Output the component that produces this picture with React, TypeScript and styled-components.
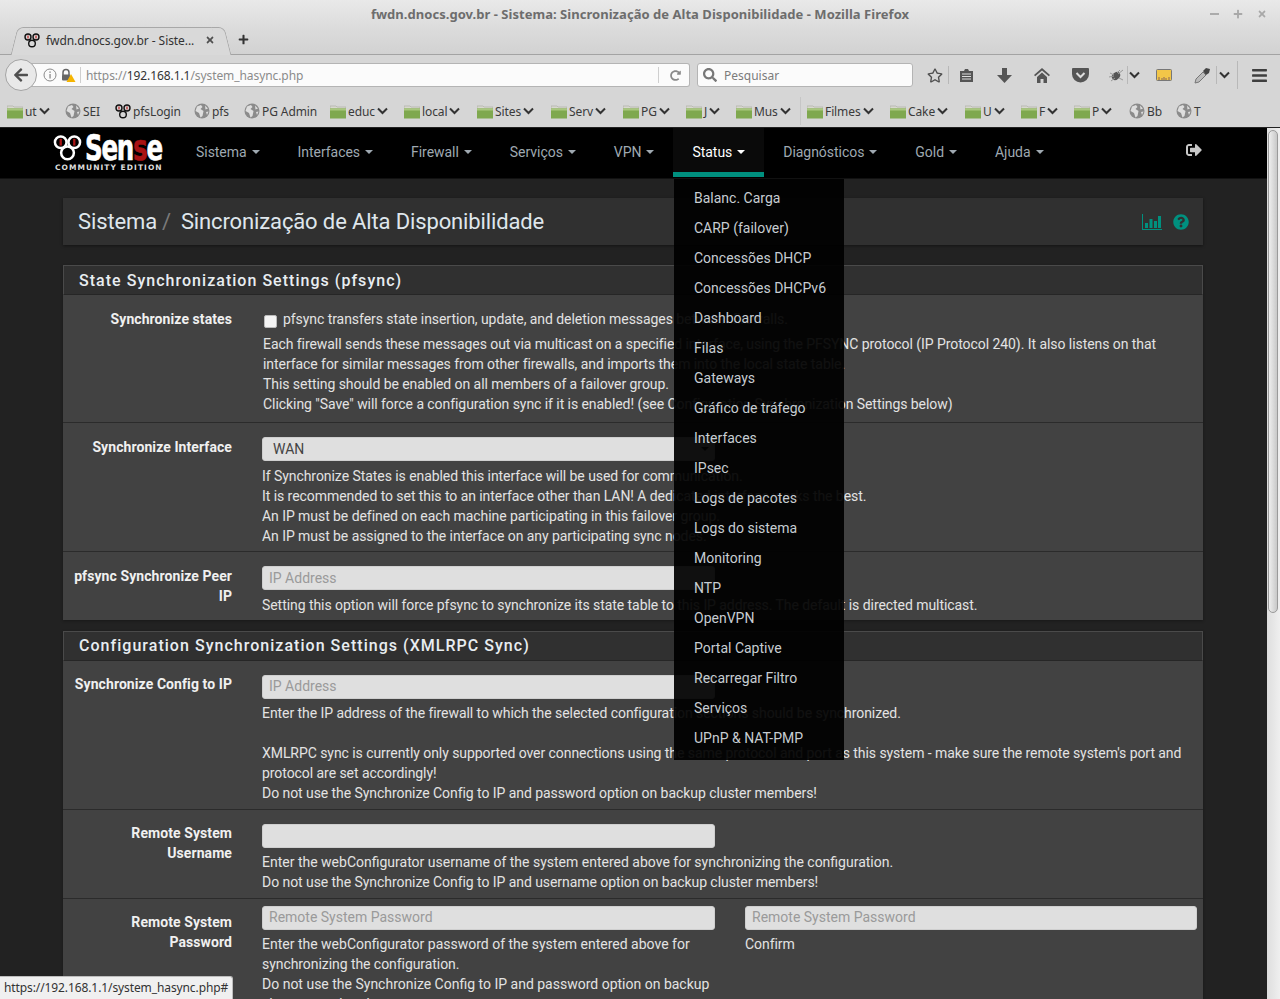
import React from "react";
import styled, { createGlobalStyle } from "styled-components";
import {
  FaArrowLeft,
  FaBars,
  FaPlus,
  FaQuestionCircle,
  FaRedoAlt,
  FaRegStar,
  FaSearch,
  FaSignOutAlt,
  FaTimes,
} from "react-icons/fa";

const GlobalStyle = createGlobalStyle`
  html, body {
    margin: 0;
    padding: 0;
    height: 999px;
    overflow: hidden;
    background: #222;
  }
  * {
    box-sizing: border-box;
  }
`;

const Window = styled.div`
  width: 1280px;
  height: 999px;
  position: relative;
  overflow: hidden;
  display: flex;
  flex-direction: column;
`;

const Chrome = styled.div`
  font-family: "Noto Sans", sans-serif;
  color: #3c3c3c;
  background: #d6d6d6;
`;

const TitleBar = styled.div`
  height: 27px;
  display: flex;
  align-items: center;
  justify-content: center;
  position: relative;
  font-size: 13px;
  font-weight: 700;
  letter-spacing: 0.035px;
  color: #6d6d6d;
  background: linear-gradient(#e9e9e9, #dcdcdc);
`;

const WindowButtons = styled.div`
  position: absolute;
  right: 13px;
  top: 9px;
  display: flex;
  gap: 14px;
  align-items: center;
  color: #a8a8a8;
  font-size: 10px;
`;

const Minimize = styled.span`
  width: 9px;
  height: 2px;
  background: #ababab;
`;

const TabStrip = styled.div`
  height: 28px;
  display: flex;
  align-items: flex-end;
  padding-left: 20px;
  border-bottom: 1px solid #a3a3a3;
  background: linear-gradient(#dcdcdc, #d2d2d2);
`;

const Tab = styled.div`
  width: 202px;
  height: 28px;
  margin-bottom: -1px;
  position: relative;
  display: flex;
  align-items: center;
  padding: 0 0 3px 4px;
  gap: 7px;
  font-size: 12px;
  letter-spacing: -0.07px;
  color: #333;
  background: #d9d9d9;
  border-top: 1px solid #a8a8a8;
  border-radius: 6px 6px 0 0;

  &::before,
  &::after {
    content: "";
    position: absolute;
    top: -1px;
    bottom: 0;
    width: 12px;
    background: #d9d9d9;
    border-top: 1px solid #a8a8a8;
  }
  &::before {
    left: -6px;
    transform: skewX(-14deg);
    border-left: 1px solid #a8a8a8;
    border-radius: 6px 0 0 0;
  }
  &::after {
    right: -6px;
    transform: skewX(14deg);
    border-right: 1px solid #a8a8a8;
    border-radius: 0 6px 0 0;
  }
`;

const TabContent = styled.span`
  position: relative;
  z-index: 1;
  display: flex;
  align-items: center;
  gap: 6px;
  white-space: nowrap;
`;

const TabClose = styled.span`
  position: relative;
  z-index: 1;
  display: flex;
  margin-left: 4px;
  color: #505050;
  font-size: 10px;
`;

const NewTab = styled.span`
  display: flex;
  margin: 0 0 9px 16px;
  font-size: 11px;
  color: #333;
`;

const NavBar = styled.div`
  height: 39px;
  display: flex;
  align-items: center;
  padding: 1px 0 0 5px;
  background: #d6d6d6;
  position: relative;
`;

const BackButton = styled.div`
  width: 32px;
  height: 32px;
  border-radius: 50%;
  border: 1px solid #a4a4a4;
  background: #e9e9e9;
  display: flex;
  align-items: center;
  justify-content: center;
  color: #505050;
  font-size: 16px;
  position: relative;
  z-index: 1;
  flex: none;
`;

const UrlBar = styled.div`
  width: 661px;
  height: 24px;
  margin-left: -8px;
  padding-left: 14px;
  display: flex;
  align-items: center;
  background: #fbfbfb;
  border: 1px solid #b4b4b4;
  border-left: none;
  border-radius: 0 3px 3px 0;
  font-size: 12px;
  letter-spacing: -0.08px;
  color: #8b8b8b;
  flex: none;
`;

const UrlHost = styled.span`
  color: #333;
`;

const UrlDivider = styled.span`
  width: 1px;
  height: 16px;
  background: #cfcfcf;
  margin: 0 5px 0 4px;
`;

const UrlText = styled.span`
  flex: 1;
`;

const Reload = styled.span`
  display: flex;
  width: 25px;
  padding-right: 3px;
  justify-content: center;
  color: #8a8a8a;
  font-size: 11px;
`;

const SearchBar = styled.div`
  width: 216px;
  height: 24px;
  margin-left: 7px;
  padding-left: 5px;
  display: flex;
  align-items: center;
  gap: 7px;
  background: #fbfbfb;
  border: 1px solid #b4b4b4;
  border-radius: 3px;
  font-size: 12px;
  color: #7c7c7c;
  flex: none;
`;

const ToolIcons = styled.div`
  flex: 1;
  display: flex;
  align-items: center;
  padding-left: 14px;
  color: #4f4f4f;
  font-size: 15px;
`;

const ToolIcon = styled.span<{ $w: number }>`
  width: ${(p) => p.$w}px;
  display: flex;
  align-items: center;
  justify-content: center;
  flex: none;
`;

const ToolSep = styled.span`
  width: 1px;
  height: 18px;
  background: #b8b8b8;
  flex: none;
`;

const ToolSepTall = styled(ToolSep)`
  height: 28px;
  margin: 0 12px 0 6px;
`;

const BookmarkBar = styled.div`
  height: 34px;
  display: flex;
  align-items: center;
  padding: 1px 0 0 7px;
  font-size: 12px;
  color: #3a3a3a;
  border-bottom: 1px solid #222;
  background: #d6d6d6;
  letter-spacing: -0.1px;
`;

const Bookmark = styled.span<{ $w: number; $sep?: boolean }>`
  width: ${(p) => p.$w}px;
  display: flex;
  align-items: center;
  gap: 2px;
  white-space: nowrap;
  flex: none;
  ${(p) =>
    p.$sep
      ? `
    height: 28px;
    margin-right: 6px;
    border-right: 1px solid #c6c6c6;
  `
      : ""}
`;

const Page = styled.div`
  flex: 1;
  display: flex;
  min-height: 0;
`;

const Viewport = styled.div`
  flex: 1;
  min-width: 0;
  font-family: Roboto, sans-serif;
  background: #222;
  overflow: hidden;
`;

const Scrollbar = styled.div`
  width: 13px;
  flex: none;
  background: linear-gradient(90deg, #dedede, #efefef);
  padding: 2px 2px 0 1px;
`;

const Thumb = styled.div`
  height: 483px;
  border-radius: 5px;
  border: 1px solid #9a9a9a;
  background: linear-gradient(90deg, #eee, #c8c8c8);
`;

const TopNav = styled.div`
  height: 51px;
  background: #000;
  display: flex;
  align-items: flex-start;
  padding-left: 53px;
  border-bottom: 1px solid #111;
`;

const Logo = styled.div`
  width: 124px;
  flex: none;
  padding-top: 6px;
`;

const LogoRow = styled.div`
  display: flex;
  align-items: center;
  height: 28px;

  svg {
    flex: none;
  }
`;

const LogoWord = styled.span`
  font-family: "DejaVu Sans Condensed", "DejaVu Sans", sans-serif;
  font-weight: 700;
  font-size: 35px;
  line-height: 28px;
  color: #fff;
  letter-spacing: -1.6px;
  display: inline-block;
  margin-left: 3px;
  transform: scaleX(0.78);
  transform-origin: left center;
  white-space: nowrap;
  -webkit-text-stroke: 0.6px currentColor;
`;

const LogoRed = styled.span`
  color: #a91313;
`;

const LogoEdition = styled.div`
  font-family: "DejaVu Sans", sans-serif;
  font-weight: 700;
  font-size: 7.5px;
  letter-spacing: 1.05px;
  line-height: 8px;
  margin: 2px 0 0 2px;
  color: #ddd;
  white-space: nowrap;
`;

const NavItem = styled.div<{ $active?: boolean }>`
  display: flex;
  align-items: center;
  gap: 5px;
  padding: 4px 19px 0;
  height: 49px;
  font-size: 14px;
  letter-spacing: -0.04px;
  color: ${(p) => (p.$active ? "#fff" : "#9fa9b1")};
  background: ${(p) => (p.$active ? "#0a0a0a" : "transparent")};
  border-bottom: 5px solid ${(p) => (p.$active ? "#00907f" : "transparent")};
  white-space: nowrap;
`;

const Caret = styled.span`
  width: 0;
  height: 0;
  border-left: 4px solid transparent;
  border-right: 4px solid transparent;
  border-top: 4px solid currentColor;
`;

const LogoutIcon = styled.div`
  margin-left: auto;
  padding: 14px 65px 0 0;
  color: #c8c8c8;
  font-size: 16px;
`;

const Content = styled.div`
  padding: 19px 64px 0 63px;
`;

const Breadcrumb = styled.div`
  height: 47px;
  background: #303030;
  display: flex;
  align-items: center;
  padding: 0 15px;
  font-size: 22px;
  letter-spacing: -0.13px;
  color: #dfe6ec;
  box-shadow: 0 1px 3px rgba(0, 0, 0, 0.45);
`;

const Slash = styled.span`
  color: #7a7a7a;
  margin: 0 10px 0 5px;
`;

const BreadActions = styled.div`
  margin-left: auto;
  margin-right: -1px;
  display: flex;
  align-items: center;
  gap: 11px;
  color: #00907f;
  font-size: 16px;
`;

const Label = styled.div`
  text-align: right;
  font-weight: 700;
  color: #f0f0f0;
  letter-spacing: 0.08px;
  padding-left: 10px;
`;

const Input = styled.div<{ $width?: number }>`
  width: ${(p) => p.$width ?? 453}px;
  height: 24px;
  margin-bottom: 5px;
  padding: 0 6px;
  background: #dfdfdf;
  border: 1px solid #cfcfcf;
  border-radius: 3px;
  display: flex;
  align-items: center;
  color: #9a9a9a;
  font-size: 14px;
  letter-spacing: 0;
`;

const Select = styled(Input)`
  color: #444;
  padding: 0 5px 0 10px;
`;

const SelectCaret = styled(Caret)`
  margin-left: auto;
  color: #333;
`;

const Section = styled.section`
  margin: 20px 0 11px;
  background: #424242;
  box-shadow: 0 1px 3px rgba(0, 0, 0, 0.3);
`;

const SectionTitle = styled.h2`
  margin: 0;
  height: 30px;
  padding: 0 15px;
  display: flex;
  align-items: center;
  font-size: 16px;
  font-weight: 500;
  letter-spacing: 1.03px;
  color: #e8edf1;
  background: #303030;
  border: 1px solid #4a4a4a;
  border-bottom-color: #262626;
`;

const SectionNext = styled(Section)`
  margin-top: 0;

  ${SectionTitle} {
    padding-bottom: 2px;
  }
  ${Input} {
    margin-bottom: 4px;
    padding-bottom: 2px;
  }
  ${Label} {
    margin-top: -1px;
  }
`;

const Row = styled.div<{ $pb?: number }>`
  display: grid;
  grid-template-columns: 169px 1fr;
  column-gap: 30px;
  padding: 14px 6px ${(p) => p.$pb ?? 5}px 0;
  border-bottom: 1px solid #2b2b2b;
  font-size: 14px;
  line-height: 20px;
  color: #e3e3e3;

  &:last-child {
    border-bottom: none;
  }
`;

const Field = styled.div<{ $indent?: boolean }>`
  min-width: 0;
  letter-spacing: -0.06px;
  padding-left: ${(p) => (p.$indent ? "1px" : "0")};
`;

const TwoColumns = styled.div`
  display: grid;
  grid-template-columns: 453px 452px;
  column-gap: 30px;
  margin-top: -7px;
  letter-spacing: -0.06px;
`;

const Line = styled.div<{ $wide?: boolean }>`
  white-space: nowrap;
  ${(p) => (p.$wide ? "letter-spacing: 0;" : "")}
`;

const BlankLine = styled.div`
  height: 20px;
`;

const CheckLine = styled.div`
  display: flex;
  align-items: center;
  gap: 6px;
  margin-left: 1px;
  margin-bottom: 5px;
`;

const Checkbox = styled.span`
  width: 13px;
  height: 13px;
  margin-top: 4px;
  border-radius: 2px;
  background: #f4f4f4;
  border: 1px solid #bbb;
  flex: none;
`;

const Menu = styled.div`
  position: absolute;
  left: 674px;
  top: 179px;
  width: 170px;
  height: 581px;
  padding: 4px 0 0;
  background: rgba(0, 0, 0, 0.93);
  font-family: Roboto, sans-serif;
  font-size: 14px;
  color: #c7cdd2;
`;

const MenuItem = styled.div`
  height: 30px;
  line-height: 30px;
  padding-left: 20px;
  white-space: nowrap;
`;

const StatusTip = styled.div`
  position: absolute;
  left: 0;
  bottom: 0;
  height: 23px;
  width: 233px;
  padding: 0 0 2px 4px;
  display: flex;
  align-items: center;
  font-family: "Noto Sans", sans-serif;
  font-size: 12px;
  letter-spacing: -0.1px;
  color: #333;
  background: #f0f0f0;
  border: 1px solid #bdbdbd;
  border-left: none;
  border-bottom: none;
  border-radius: 0 3px 0 0;
  white-space: nowrap;
`;

const Folder = () => (
  <svg width="16" height="15" viewBox="0 0 16 15">
    <path d="M0 2h6l1 1h9v2H0z" fill="#d8d8d0" stroke="#a8a8a0" strokeWidth=".6" />
    <rect y="4.500" width="16" height="10" fill="#7fa84f" />
    <rect y="4.500" width="16" height="2" fill="#a9c77f" />
  </svg>
);

const Globe = () => (
  <svg width="16" height="16" viewBox="0 0 16 16">
    <circle cx="8" cy="8" r="7.500" fill="#8b8b8b" />
    <path d="M3 3.500 7 2l1.500 2-2 2 3 2-1 5-2 1.500L5 10 1.500 8zM11 2.500l3 3-2.500 1zM12 9l2.500-.5-1.500 3.500z" fill="#dedede" />
  </svg>
);

const PfIcon = ({ size = 16 }: { size?: number }) => (
  <svg width={size} height={size} viewBox="0 0 16 16" fill="none">
    <circle cx="4" cy="5" r="3" stroke="#111" strokeWidth="1.4" />
    <circle cx="12" cy="5" r="3" stroke="#111" strokeWidth="1.4" />
    <circle cx="8" cy="11.500" r="3.300" stroke="#111" strokeWidth="1.4" />
    <rect x="3.400" y="3.500" width="1.200" height="3" fill="#b22" />
    <rect x="11.400" y="3.500" width="1.200" height="3" fill="#b22" />
  </svg>
);

const Chevron = () => (
  <svg width="11" height="8" viewBox="0 0 11 8" fill="none" stroke="#333" strokeWidth="2">
    <path d="M1 1.500 5.500 6 10 1.500" />
  </svg>
);

const LogoMark = () => (
  <svg width="29" height="28" viewBox="0 0 30 28" fill="none">
    <circle cx="8" cy="8" r="6" stroke="#fff" strokeWidth="2.6" />
    <circle cx="22" cy="8" r="6" stroke="#fff" strokeWidth="2.6" />
    <circle cx="15" cy="19" r="6.600" stroke="#fff" strokeWidth="2.6" />
    <rect x="6.800" y="4.500" width="2.400" height="7" fill="#a91313" />
    <rect x="20.800" y="4.500" width="2.400" height="7" fill="#a91313" />
  </svg>
);

const bookmarks = [
  { name: "ut", w: 58, kind: "folder" },
  { name: "SEI", w: 50, kind: "globe" },
  { name: "pfsLogin", w: 79, kind: "pf" },
  { name: "pfs", w: 50, kind: "globe" },
  { name: "PG Admin", w: 86, kind: "globe" },
  { name: "educ", w: 74, kind: "folder" },
  { name: "local", w: 73, kind: "folder" },
  { name: "Sites", w: 74, kind: "folder" },
  { name: "Serv", w: 72, kind: "folder" },
  { name: "PG", w: 63, kind: "folder" },
  { name: "J", w: 50, kind: "folder" },
  { name: "Mus", w: 65, kind: "folder", sep: true },
  { name: "Filmes", w: 83, kind: "folder" },
  { name: "Cake", w: 75, kind: "folder" },
  { name: "U", w: 56, kind: "folder" },
  { name: "F", w: 53, kind: "folder" },
  { name: "P", w: 55, kind: "folder" },
  { name: "Bb", w: 47, kind: "globe" },
  { name: "T", w: 30, kind: "globe" },
];

const navItems = ["Sistema", "Interfaces", "Firewall", "Serviços", "VPN"];
const navItemsAfter = ["Diagnósticos", "Gold", "Ajuda"];

const statusMenu = [
  "Balanc. Carga",
  "CARP (failover)",
  "Concessões DHCP",
  "Concessões DHCPv6",
  "Dashboard",
  "Filas",
  "Gateways",
  "Gráfico de tráfego",
  "Interfaces",
  "IPsec",
  "Logs de pacotes",
  "Logs do sistema",
  "Monitoring",
  "NTP",
  "OpenVPN",
  "Portal Captive",
  "Recarregar Filtro",
  "Serviços",
  "UPnP & NAT-PMP",
];

export default function App() {
  return (
    <Window>
      <GlobalStyle />
      <Chrome>
        <TitleBar>
          fwdn.dnocs.gov.br - Sistema: Sincronização de Alta Disponibilidade - Mozilla Firefox
          <WindowButtons>
            <Minimize />
            <FaPlus />
            <FaTimes />
          </WindowButtons>
        </TitleBar>
        <TabStrip>
          <Tab>
            <TabContent>
              <PfIcon />
              fwdn.dnocs.gov.br - Siste...
            </TabContent>
            <TabClose>
              <FaTimes />
            </TabClose>
          </Tab>
          <NewTab>
            <FaPlus />
          </NewTab>
        </TabStrip>
        <NavBar>
          <BackButton>
            <FaArrowLeft />
          </BackButton>
          <UrlBar>
            <svg width="14" height="14" viewBox="0 0 14 14" fill="none">
              <circle cx="7" cy="7" r="6" stroke="#8a8a8a" />
              <rect x="6.400" y="6" width="1.300" height="4.500" fill="#8a8a8a" />
              <rect x="6.400" y="3.400" width="1.300" height="1.500" fill="#8a8a8a" />
            </svg>
            <svg width="15" height="15" viewBox="0 0 15 15" style={{ marginLeft: 4 }}>
              <path d="M2 7V4.500a3 3 0 0 1 6 0V7" fill="none" stroke="#666" strokeWidth="1.5" />
              <rect x="1" y="6.500" width="8" height="6" rx="1" fill="#666" />
              <path d="M10 6l4.500 8h-9z" fill="#f5b400" />
            </svg>
            <UrlDivider />
            <UrlText>
              https://<UrlHost>192.168.1.1</UrlHost>/system_hasync.php
            </UrlText>
            <UrlDivider />
            <Reload>
              <FaRedoAlt />
            </Reload>
          </UrlBar>
          <SearchBar>
            <FaSearch color="#777" size={14} />
            Pesquisar
          </SearchBar>
          <ToolIcons>
            <ToolIcon $w={16}>
              <FaRegStar size={17} />
            </ToolIcon>
            <ToolIcon $w={10}>
              <ToolSep />
            </ToolIcon>
            <ToolIcon $w={26}>
              <svg width="15" height="15" viewBox="0 0 15 15">
                <path d="M1 3h4l1-2h3l1 2h4v11H1z" fill="#555" />
                <path d="M3 6h9M3 8.500h9M3 11h9" stroke="#ddd" />
              </svg>
            </ToolIcon>
            <ToolIcon $w={50}>
              <svg width="15" height="15" viewBox="0 0 15 15" fill="#555">
                <path d="M5 0h5v7h5l-7.500 8L0 7h5z" />
              </svg>
            </ToolIcon>
            <ToolIcon $w={26}>
              <svg width="16" height="15" viewBox="0 0 16 15" fill="#555">
                <path d="M8 0 0 7l1.200 1.300L8 2.500l6.800 5.800L16 7z" />
                <path d="M3 9 8 4.500 13 9v6H9.500v-4h-3v4H3z" />
              </svg>
            </ToolIcon>
            <ToolIcon $w={50}>
              <svg width="17" height="15" viewBox="0 0 17 15">
                <path d="M1 0h15a1 1 0 0 1 1 1v5a8.500 8.500 0 0 1-17 0V1a1 1 0 0 1 1-1z" fill="#555" />
                <path d="M4.500 5 8.500 9l4-4" fill="none" stroke="#ddd" strokeWidth="2" />
              </svg>
            </ToolIcon>
            <ToolIcon $w={22}>
              <svg width="17" height="15" viewBox="0 0 17 15">
                <ellipse cx="8" cy="8" rx="3.500" ry="4.500" fill="#555" transform="rotate(50 8 8)" />
                <path d="M1 9l5-1M3 13l4-3M10 6l5-4M12 2l-3 3M2 5l4 2M11 10l4 2" stroke="#999" />
              </svg>
            </ToolIcon>
            <ToolIcon $w={1}>
              <ToolSep />
            </ToolIcon>
            <ToolIcon $w={12}>
              <Chevron />
            </ToolIcon>
            <ToolIcon $w={48}>
              <svg width="16" height="13" viewBox="0 0 16 13">
                <rect x=".5" y=".5" width="15" height="11" rx="1" fill="#f2c648" stroke="#777" />
                <path d="M3 11V8M6 11V9M8 11V8M10 11V9M13 11V8" stroke="#865" />
              </svg>
            </ToolIcon>
            <ToolIcon $w={28}>
              <svg width="17" height="17" viewBox="0 0 17 17">
                <path d="M1 16l1-4 7-7 3 3-7 7z" fill="#bbb" stroke="#777" />
                <path d="M9 4l3-3 4 1-1 4-3 2z" fill="#444" />
              </svg>
            </ToolIcon>
            <ToolIcon $w={1}>
              <ToolSep />
            </ToolIcon>
            <ToolIcon $w={14}>
              <Chevron />
            </ToolIcon>
            <ToolSepTall />
            <ToolIcon $w={18}>
              <FaBars size={17} color="#3f3f3f" />
            </ToolIcon>
          </ToolIcons>
        </NavBar>
        <BookmarkBar>
          {bookmarks.map((b) => (
            <Bookmark key={b.name} $w={b.w} $sep={b.sep}>
              {b.kind === "folder" && <Folder />}
              {b.kind === "globe" && <Globe />}
              {b.kind === "pf" && <PfIcon />}
              {b.name}
              {b.kind === "folder" && <Chevron />}
            </Bookmark>
          ))}
        </BookmarkBar>
      </Chrome>
      <Page>
        <Viewport>
          <TopNav>
            <Logo>
              <LogoRow>
                <LogoMark />
                <LogoWord>
                  Sen<LogoRed>s</LogoRed>e
                </LogoWord>
              </LogoRow>
              <LogoEdition>COMMUNITY EDITION</LogoEdition>
            </Logo>
            {navItems.map((n) => (
              <NavItem key={n}>
                {n}
                <Caret />
              </NavItem>
            ))}
            <NavItem $active>
              Status
              <Caret />
            </NavItem>
            {navItemsAfter.map((n) => (
              <NavItem key={n}>
                {n}
                <Caret />
              </NavItem>
            ))}
            <LogoutIcon>
              <FaSignOutAlt />
            </LogoutIcon>
          </TopNav>
          <Content>
            <Breadcrumb>
              Sistema
              <Slash>/</Slash>
              Sincronização de Alta Disponibilidade
              <BreadActions>
                <svg width="20" height="16" viewBox="0 0 20 16" fill="currentColor">
                  <path d="M0 0h1v15h19v1H0z" />
                  <path d="M3 9h3v5H3zM7.500 5h3v9h-3zM12 7h3v7h-3zM16 2h3v12h-3z" />
                </svg>
                <FaQuestionCircle size={16} />
              </BreadActions>
            </Breadcrumb>
            <Section>
              <SectionTitle>State Synchronization Settings (pfsync)</SectionTitle>
              <Row $pb={8}>
                <Label>Synchronize states</Label>
                <Field $indent>
                  <CheckLine>
                    <Checkbox />
                    pfsync transfers state insertion, update, and deletion messages between firewalls.
                  </CheckLine>
                  <Line>
                    Each firewall sends these messages out via multicast on a specified interface, using the PFSYNC protocol (IP Protocol 240). It also listens on that
                  </Line>
                  <Line>interface for similar messages from other firewalls, and imports them into the local state table.</Line>
                  <Line>This setting should be enabled on all members of a failover group.</Line>
                  <Line>Clicking "Save" will force a configuration sync if it is enabled! (see Configuration Synchronization Settings below)</Line>
                </Field>
              </Row>
              <Row>
                <Label>Synchronize Interface</Label>
                <Field>
                  <Select>
                    WAN
                    <SelectCaret />
                  </Select>
                  <Line>If Synchronize States is enabled this interface will be used for communication.</Line>
                  <Line>It is recommended to set this to an interface other than LAN! A dedicated interface works the best.</Line>
                  <Line>An IP must be defined on each machine participating in this failover group.</Line>
                  <Line>An IP must be assigned to the interface on any participating sync nodes.</Line>
                </Field>
              </Row>
              <Row>
                <Label>pfsync Synchronize Peer IP</Label>
                <Field>
                  <Input>IP Address</Input>
                  <Line>Setting this option will force pfsync to synchronize its state table to this IP address. The default is directed multicast.</Line>
                </Field>
              </Row>
            </Section>
            <SectionNext>
              <SectionTitle>Configuration Synchronization Settings (XMLRPC Sync)</SectionTitle>
              <Row $pb={6}>
                <Label>Synchronize Config to IP</Label>
                <Field>
                  <Input>IP Address</Input>
                  <Line>Enter the IP address of the firewall to which the selected configuration sections should be synchronized.</Line>
                  <BlankLine />
                  <Line>XMLRPC sync is currently only supported over connections using the same protocol and port as this system - make sure the remote system's port and</Line>
                  <Line>protocol are set accordingly!</Line>
                  <Line>Do not use the Synchronize Config to IP and password option on backup cluster members!</Line>
                </Field>
              </Row>
              <Row $pb={6}>
                <Label>Remote System Username</Label>
                <Field>
                  <Input />
                  <Line $wide>Enter the webConfigurator username of the system entered above for synchronizing the configuration.</Line>
                  <Line>Do not use the Synchronize Config to IP and username option on backup cluster members!</Line>
                </Field>
              </Row>
              <Row>
                <Label>Remote System Password</Label>
                <TwoColumns>
                  <div>
                    <Input>Remote System Password</Input>
                    <Line $wide>Enter the webConfigurator password of the system entered above for</Line>
                    <Line>synchronizing the configuration.</Line>
                    <Line $wide>Do not use the Synchronize Config to IP and password option on backup</Line>
                    <Line>cluster members!</Line>
                  </div>
                  <div>
                    <Input $width={452}>Remote System Password</Input>
                    <Line>Confirm</Line>
                  </div>
                </TwoColumns>
              </Row>
            </SectionNext>
          </Content>
        </Viewport>
        <Scrollbar>
          <Thumb />
        </Scrollbar>
      </Page>
      <Menu>
        {statusMenu.map((m) => (
          <MenuItem key={m}>{m}</MenuItem>
        ))}
      </Menu>
      <StatusTip>https://192.168.1.1/system_hasync.php#</StatusTip>
    </Window>
  );
}
